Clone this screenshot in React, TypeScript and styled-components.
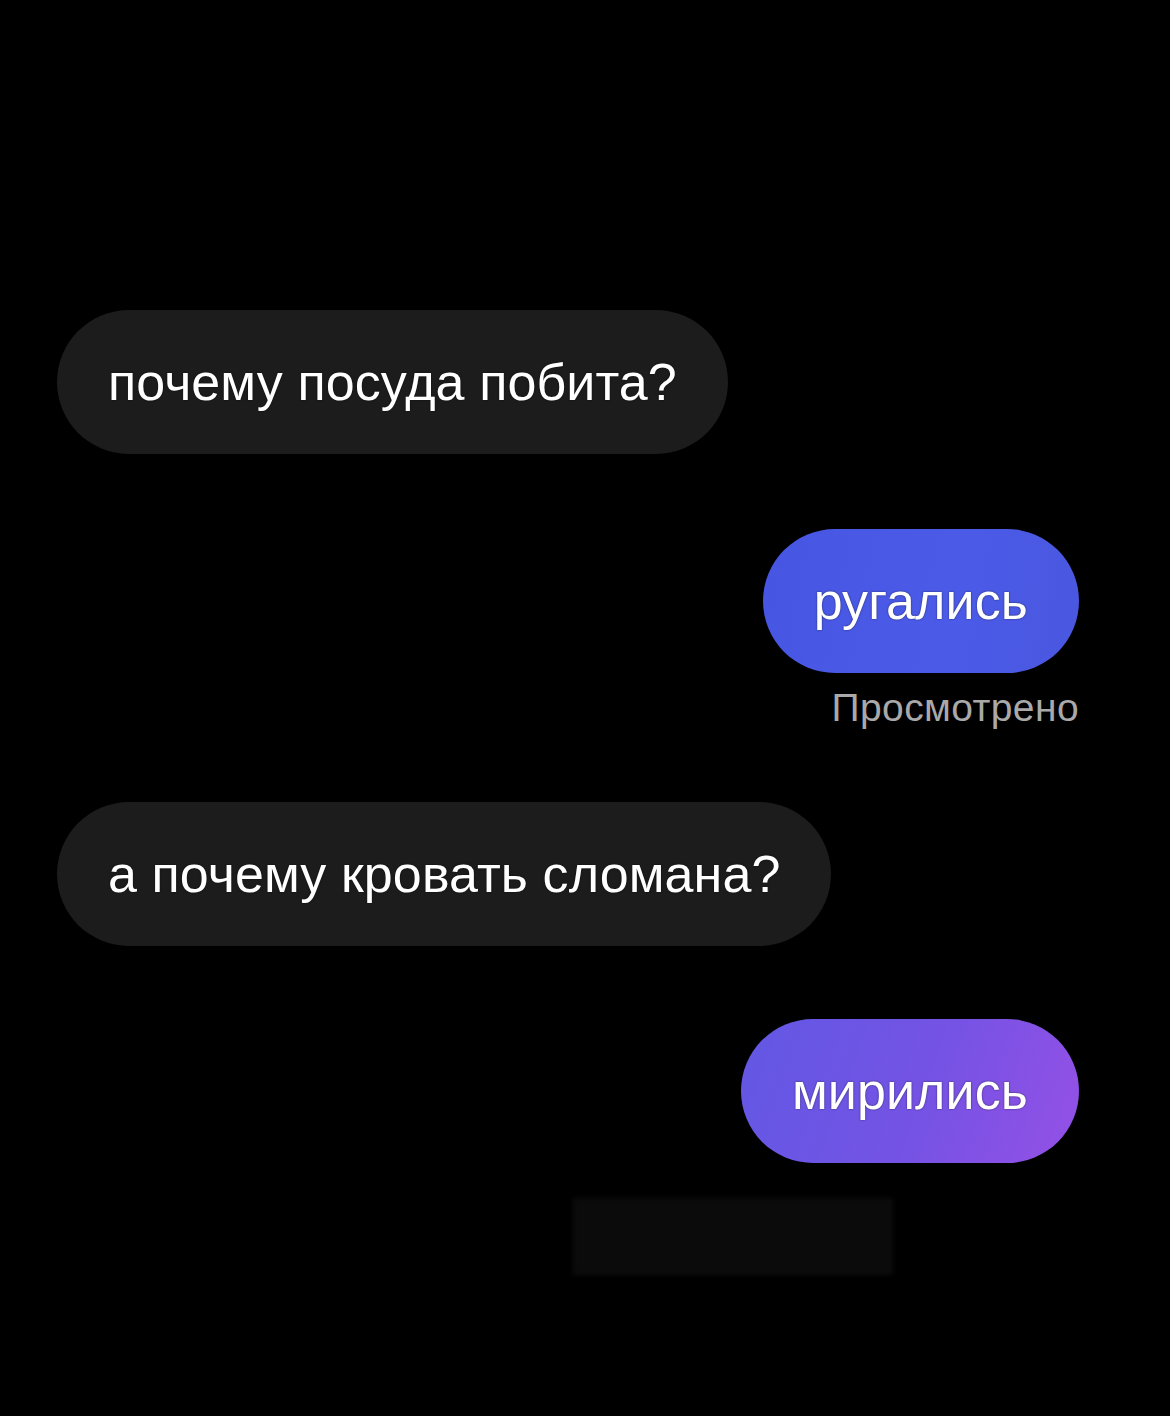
import React from "react";
import styled, { createGlobalStyle, css } from "styled-components";

type Side = "in" | "out";

type BubbleProps = {
  $tone: "dark" | "blue" | "violet";
};

const GlobalStyle = createGlobalStyle`
  html, body {
    margin: 0;
    padding: 0;
    background: #000;
  }
  body {
    font-family: "Liberation Sans", Arial, sans-serif;
    -webkit-font-smoothing: antialiased;
  }
`;

const Chat = styled.div`
  width: 1170px;
  height: 1416px;
  box-sizing: border-box;
  padding: 310px 91px 0 57px;
  background: #000;
  display: flex;
  flex-direction: column;
  overflow: hidden;
`;

const Row = styled.div<{ $side: Side; $gap: number }>`
  display: flex;
  flex-direction: column;
  align-items: ${(p) => (p.$side === "in" ? "flex-start" : "flex-end")};
  margin-bottom: ${(p) => p.$gap}px;
`;

const tones = {
  dark: css`
    background: #1c1c1c;
  `,
  blue: css`
    background: linear-gradient(100deg, #4756e2 0%, #4b5be8 60%, #4a57df 100%);
  `,
  violet: css`
    background: linear-gradient(110deg, #6258e4 0%, #7553e4 55%, #9550e6 100%);
  `,
};

const Bubble = styled.div<BubbleProps>`
  height: 144px;
  box-sizing: border-box;
  padding: 0 51px;
  display: flex;
  align-items: center;
  border-radius: 72px;
  color: #fff;
  font-size: 52px;
  letter-spacing: 0.1px;
  text-shadow: 0 0 2px rgba(0, 0, 0, 0.6);
  white-space: nowrap;
  ${(p) => tones[p.$tone]}
`;

const Seen = styled.div`
  margin-top: 13px;
  color: #a9a9a9;
  font-size: 39px;
  letter-spacing: 0.4px;
`;

/* blurred strip under the last message */
const Placeholder = styled.div`
  align-self: flex-end;
  margin-right: 186px;
  width: 320px;
  height: 77px;
  background: #0b0b0b;
  filter: blur(2px);
`;

const App = () => {
  return (
    <>
      <GlobalStyle />
      <Chat>
        <Row $side="in" $gap={75}>
          <Bubble $tone="dark">почему посуда побита?</Bubble>
        </Row>
        <Row $side="out" $gap={72}>
          <Bubble $tone="blue">ругались</Bubble>
          <Seen>Просмотрено</Seen>
        </Row>
        <Row $side="in" $gap={73}>
          <Bubble $tone="dark">а почему кровать сломана?</Bubble>
        </Row>
        <Row $side="out" $gap={35}>
          <Bubble $tone="violet">мирились</Bubble>
        </Row>
        <Placeholder />
      </Chat>
    </>
  );
};

export default App;
